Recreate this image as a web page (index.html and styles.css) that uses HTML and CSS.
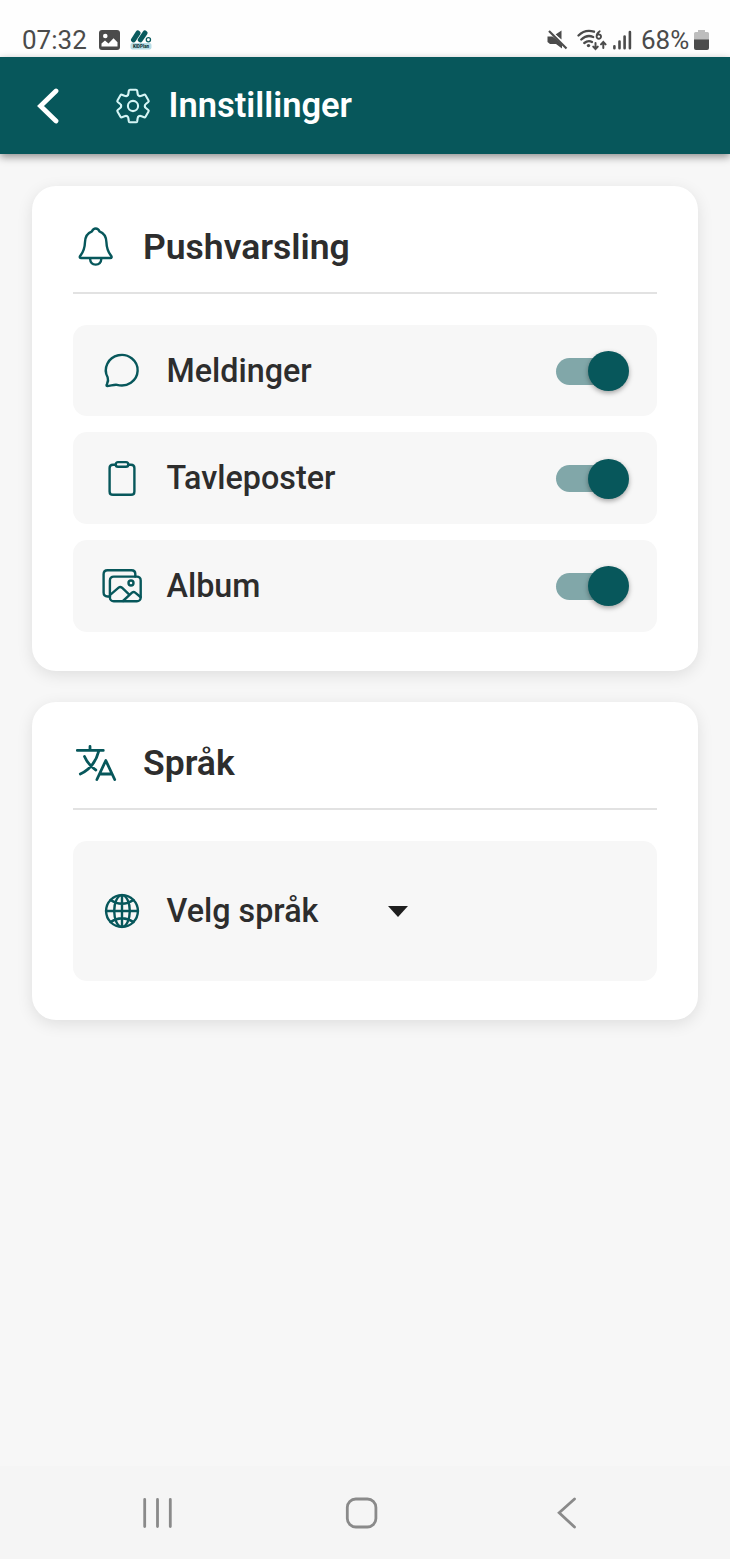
FILE: index.html
```html
<!DOCTYPE html>
<html lang="no">
<head>
<meta charset="utf-8">
<title>Innstillinger</title>
<link rel="stylesheet" href="styles.css">
</head>
<body>
<div class="phone">
  <div class="status">
    <div class="status-left">
      <span class="clock">07:32</span>
      <svg class="photo" width="21" height="20" viewBox="0 0 21 20"><rect width="21" height="20" rx="3" fill="#4b4b4b"/><circle cx="6.3" cy="6" r="2.3" fill="#fff"/><path d="M2.5 16.5v-3l3.5-3 3.5 3 5-5.2 4 4v4.2z" fill="#fff"/></svg>
      <svg class="app" width="22" height="20" viewBox="0 0 22 20"><rect x=".5" y="13" width="21" height="6.500" rx="2" fill="#b9dde5"/><path d="M3.500 9.800 8 3M10.300 9.800 15 3" stroke="#095a5e" stroke-width="5" stroke-linecap="round"/><circle cx="18.400" cy="9.800" r="2.100" fill="#fff" stroke="#095a5e" stroke-width="1.300"/><text class="tiny" x="11" y="17.900" text-anchor="middle">KIDPlan</text></svg>
    </div>
    <div class="status-right">
      <svg class="mute" width="21" height="20" viewBox="0 0 21 20"><path d="M.5 6.500h5L9 9l6 5.800V18.500l-6-4.500H3L.5 12z M8.500 4.500l6-4v9z" fill="#4b4b4b"/><path d="M3.500 .2 20.500 17" stroke="#fefefe" stroke-width="1.200"/><path d="M2 1 19.500 18.500" stroke="#4b4b4b" stroke-width="2.200"/></svg>
      <svg class="wifi" width="31" height="22" viewBox="0 0 31 22"><g fill="none" stroke="#4b4b4b" stroke-width="2.300" stroke-linecap="round"><path d="M1.500 6.500Q8 0 17 2.700M4.300 10.500Q10 5.200 16.200 8M7.300 14Q11.300 10.700 15 13"/><path stroke-width="2" d="M18.500 14v6m-2.300-2.400L18.500 20l2.300-2.400M26.300 19v-6m-2.300 2.400 2.300-2.400 2.300 2.400"/><path d="M22.700 2.200Q19.600 4 19.600 7.500M19.600 7.600a2.200 2.200 0 1 0 4.400 0a2.200 2.200 0 1 0-4.400 0" stroke-width="1.900"/></g><circle cx="11.500" cy="16.600" r="1.700" fill="#4b4b4b"/></svg>
      <svg class="signal" width="19" height="20" viewBox="0 0 19 20"><path d="M1.400 16.300v2M6.500 11.600v6.700M11.600 6.500v11.800M16.900 2v16.300" stroke="#4b4b4b" stroke-width="2.600" stroke-linecap="round"/></svg>
      <span class="level">68%</span>
      <svg class="battery" width="15" height="21" viewBox="0 0 15 21"><path d="M4 0h7v2h2.500Q15 2 15 3.500V10H0V3.500Q0 2 1.500 2H4z" fill="#bdbdbd"/><path d="M0 9.500h15V18q0 2-2 2H2q-2 0-2-2z" fill="#4b4b4b"/></svg>
    </div>
  </div>

  <header class="appbar">
    <svg class="back" width="24" height="36" viewBox="0 0 24 36"><path d="M20 3 4.500 18 20 33" fill="none" stroke="#fff" stroke-width="4.800" stroke-linecap="round"/></svg>
    <svg class="gear" width="36" height="36" viewBox="-18 -18 36 36">
      <defs><path id="tooth" d="M-5.400-10.600Q-4.800-11-4.600-12.500L-4.200-15.200Q-4-16.200-3-16.200H3Q4-16.200 4.200-15.200L4.600-12.500Q4.800-11 5.400-10.600L6.500-10"/></defs>
      <g fill="none" stroke="#d5f5f5" stroke-width="2.100" stroke-linecap="round">
        <use href="#tooth"/><use href="#tooth" transform="rotate(60)"/><use href="#tooth" transform="rotate(120)"/><use href="#tooth" transform="rotate(180)"/><use href="#tooth" transform="rotate(240)"/><use href="#tooth" transform="rotate(300)"/>
        <circle r="5.100"/>
      </g>
    </svg>
    <h1 class="title">Innstillinger</h1>
  </header>

  <main class="content">
    <section class="card">
      <div class="card-head">
        <svg class="icon" viewBox="0 0 42 42"><path d="M20.700 2.500C18.500 2.500 17.600 3.800 17 5.300 11.800 7.200 10.200 11 10 16 9.800 22 8.800 25.500 5.300 29.800 4.300 31.200 4.800 32 6.200 32H35.200C36.600 32 37.100 31.200 36.100 29.800 32.600 25.500 31.600 22 31.400 16 31.200 11 29.600 7.200 24.400 5.300 23.800 3.800 22.900 2.500 20.700 2.500ZM15 32.500C15.300 36.500 17.600 38.600 20.700 38.600S26.100 36.500 26.400 32.500"/></svg>
        <h2 class="heading">Pushvarsling</h2>
      </div>
      <div class="rows">
        <div class="row">
          <svg class="icon" viewBox="0 0 42 42"><path d="M6.200 36C5.300 36 5.400 35 6 34 7.200 31.500 7.600 30 6.600 27.200A15.900 15.300 0 1 1 16 34.800C13.500 34.200 9 36 6.200 36Z"/></svg>
          <span class="label">Meldinger</span>
          <span class="switch"><span class="thumb"></span></span>
        </div>
        <div class="row">
          <svg class="icon" viewBox="0 0 42 42"><path d="M14.500 6.700H12Q8.600 6.700 8.600 10V33.400Q8.600 36.800 12 36.800H30Q33.400 36.800 33.400 33.400V10Q33.400 6.700 30 6.700H27.500"/><rect x="14.700" y="4.100" width="12.600" height="4.700" rx="2.300"/></svg>
          <span class="label">Tavleposter</span>
          <span class="switch"><span class="thumb"></span></span>
        </div>
        <div class="row">
          <svg class="icon" viewBox="0 0 42 42"><path d="M9 31.500H6.500Q2.600 31.500 2.600 27.600V9.200Q2.600 5.200 6.500 5.200H30.500Q34.300 5.200 34.300 9V11.500"/><rect x="8.900" y="11.600" width="30.800" height="24.600" rx="3.800"/><circle cx="30" cy="18" r="2.500"/><path d="M9.200 29.800 17.600 22.700Q19.300 21.300 21 22.700L28 29.300M22 36 31 27.700Q32.600 26.300 34.200 27.600L39.500 32"/></svg>
          <span class="label">Album</span>
          <span class="switch"><span class="thumb"></span></span>
        </div>
      </div>
    </section>

    <section class="card">
      <div class="card-head">
        <svg class="icon translate" viewBox="0 0 42 42"><path d="M2.300 7.400H28.300M15 3.500V7M23.800 8C21 19 14 27 5.300 31M9.500 13.500C12 19 16 24 20.800 27M21.900 36.500 30.800 17.500 39.700 36.500M24.600 31H37"/></svg>
        <h2 class="heading">Språk</h2>
      </div>
      <div class="rows">
        <div class="row tall">
          <svg class="icon" viewBox="0 0 42 42"><g transform="translate(21 21)"><circle r="15.900"/><ellipse rx="7.800" ry="15.900"/><path d="M0-16V16M-16 0H16M-11.500-11Q0-3.500 11.500-11M-11.500 11Q0 3.500 11.500 11"/></g></svg>
          <span class="label">Velg språk</span>
          <svg class="caret" width="20" height="11" viewBox="0 0 20 11"><path d="M0 0H20L10 11Z" fill="#1e1e1e"/></svg>
        </div>
      </div>
    </section>
  </main>

  <nav class="navbar">
    <svg width="730" height="93" viewBox="0 0 730 93"><g fill="none" stroke="#8a8a8a" stroke-width="2.800" stroke-linecap="round"><path d="M144.700 33.500V60.500M157.500 33.500V60.500M170.300 33.500V60.500M574.500 33 559.200 46.800 574.500 61"/><rect x="347.300" y="33" width="28.600" height="28" rx="8.500"/></g></svg>
  </nav>
</div>
</body>
</html>
```
FILE: styles.css
```css
* { box-sizing: border-box; }
body { margin: 0; font-family: Roboto, "Liberation Sans", sans-serif; background: #f7f7f7; }
svg { display: block; flex: none; }
.phone { display: flex; flex-direction: column; width: 730px; height: 1559px; overflow: hidden; background: #f7f7f7; }
.status { display: flex; justify-content: space-between; height: 57px; flex: none; background: #fefefe; padding: 24px 21px 0 22px; color: #4b4b4b; }
.status-left, .status-right { display: flex; align-items: center; height: 32px; }
.clock, .level { font-size: 26px; line-height: 32px; }
.clock { width: 77px; }
.app { margin-left: 10px; }
.tiny { font-size: 4.500px; font-weight: 900; fill: #12383c; }
.wifi { margin-left: 9px; }
.signal { margin-left: 5px; }
.level { width: 53px; margin-left: 9px; white-space: nowrap; }
.appbar { display: flex; align-items: center; height: 97px; margin-bottom: 0.500px; flex: none; padding-left: 36px; background: #07575b; box-shadow: 0 3px 8px rgba(0,0,0,.42); position: relative; }
.gear { margin-left: 55px; }
.title { margin: 0 0 1px 17.500px; color: #fff; font-size: 34.500px; line-height: 40px; font-weight: 600; }
.content { display: flex; flex-direction: column; gap: 31px; padding: 31px 32px 0; flex: 1; }
.card { padding: 33px 41px 39px; border-radius: 24px; background: #fff; box-shadow: 0 4px 16px rgba(0,0,0,.1); }
.card-head { display: flex; align-items: center; height: 75px; padding: 0 0 17px 2px; border-bottom: 2px solid #e2e2e2; }
.icon { width: 42px; height: 42px; fill: none; stroke: #07575b; stroke-width: 2.400; stroke-linecap: round; stroke-linejoin: round; }
.translate { stroke-width: 2.800; margin-top: 2px; }
.heading { margin: 1px 0 0 26px; color: #2d2d2d; font-size: 35.500px; line-height: 40px; font-weight: 600; }
.rows { display: flex; flex-direction: column; gap: 16px; padding-top: 31px; }
.row { display: flex; align-items: center; height: 91.700px; padding: 1.500px 28px 0 27.500px; border-radius: 14px; background: #f7f7f7; }
.tall { height: 140px; }
.label { margin: 0 0 1px 24px; color: #2d2d2d; font-size: 32.300px; line-height: 38px; font-weight: 500; }
.switch { display: flex; align-items: center; justify-content: flex-end; width: 73.500px; height: 27px; margin-left: auto; border-radius: 14px; background: linear-gradient(90deg, #81a7a9 60px, transparent 60px); }
.thumb { width: 41px; height: 40px; flex: none; border-radius: 50%; background: #07575b; box-shadow: 0 2px 5px rgba(0,0,0,.35); }
.caret { margin-left: 70px; }
.navbar { height: 93px; flex: none; background: #f5f5f5; }
```
